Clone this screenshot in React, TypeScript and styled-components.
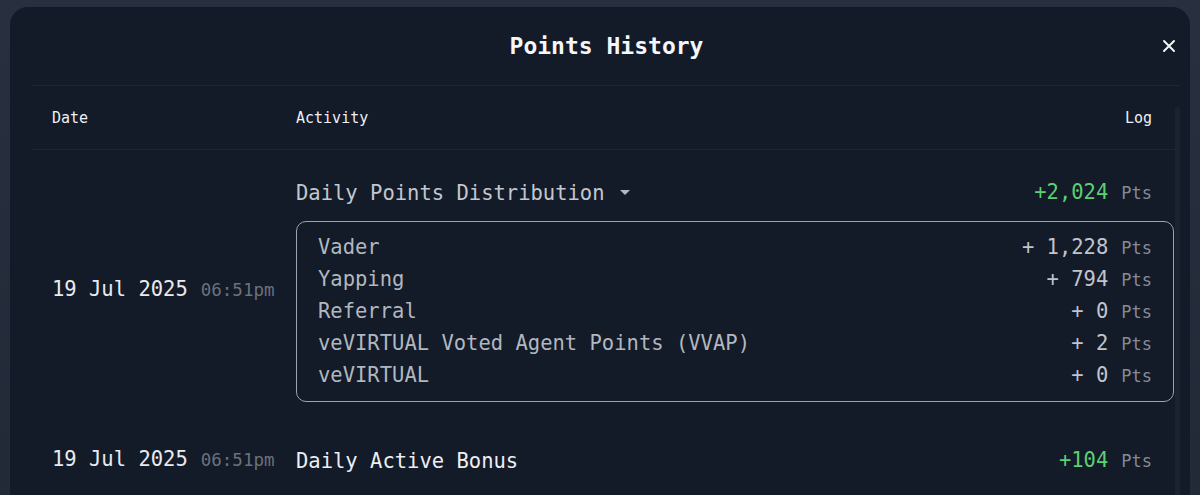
import React from "react";
import styled, { createGlobalStyle } from "styled-components";

interface SubPoint {
  label: string;
  value: string;
}

interface HistoryEntry {
  date: string;
  time: string;
  activity: string;
  total: string;
  breakdown?: SubPoint[];
}

const entries: HistoryEntry[] = [
  {
    date: "19 Jul 2025",
    time: "06:51pm",
    activity: "Daily Points Distribution",
    total: "+2,024",
    breakdown: [
      { label: "Vader", value: "1,228" },
      { label: "Yapping", value: "794" },
      { label: "Referral", value: "0" },
      { label: "veVIRTUAL Voted Agent Points (VVAP)", value: "2" },
      { label: "veVIRTUAL", value: "0" },
    ],
  },
  {
    date: "19 Jul 2025",
    time: "06:51pm",
    activity: "Daily Active Bonus",
    total: "+104",
  },
];

const App: React.FC = () => {
  return (
    <>
      <GlobalStyle />
      <Page>
        <Modal>
          <ModalHeader>
            <span />
            <Title>Points History</Title>
            <CloseButton aria-label="Close">
              <svg width="14" height="14" viewBox="0 0 14 14">
                <path
                  d="M2 2 L12 12 M12 2 L2 12"
                  stroke="#f3f4f6"
                  strokeWidth="2"
                  strokeLinecap="round"
                />
              </svg>
            </CloseButton>
          </ModalHeader>
          <Divider />
          <Body>
            <Table>
              <HeadRow>
                <HeadCell>Date</HeadCell>
                <HeadCell>Activity</HeadCell>
                <HeadCell>Log</HeadCell>
              </HeadRow>
              <Rows>
                {entries.map((entry, i) => (
                  <Row key={i}>
                    <DateCell>
                      {entry.date}
                      <Time>{entry.time}</Time>
                    </DateCell>
                    <Content>
                      <TitleLine>
                        <ActivityName muted={!!entry.breakdown}>
                          {entry.activity}
                          {entry.breakdown && <Caret />}
                        </ActivityName>
                        <Amount>
                          <Gain>{entry.total}</Gain>
                          <Unit>Pts</Unit>
                        </Amount>
                      </TitleLine>
                      {entry.breakdown && (
                        <Breakdown>
                          {entry.breakdown.map((item) => (
                            <BreakdownLine key={item.label}>
                              <span>{item.label}</span>
                              <Amount>
                                <span>+ {item.value}</span>
                                <Unit>Pts</Unit>
                              </Amount>
                            </BreakdownLine>
                          ))}
                        </Breakdown>
                      )}
                    </Content>
                  </Row>
                ))}
              </Rows>
            </Table>
            <ScrollTrack />
          </Body>
        </Modal>
      </Page>
    </>
  );
};

const GlobalStyle = createGlobalStyle`
  html, body {
    margin: 0;
    height: 100%;
    overflow: hidden;
    background: #242b39;
  }
  body {
    font-family: "DejaVu Sans Mono", "Liberation Mono", monospace;
  }
`;

const Page = styled.div`
  height: 100vh;
  box-sizing: border-box;
  padding: 7px 10px 0;
  background: linear-gradient(180deg, #283040 0%, #222937 100%);
`;

const Modal = styled.div`
  height: 100%;
  background: #131a28;
  border-radius: 18px 18px 0 0;
  display: flex;
  flex-direction: column;
  overflow: hidden;
`;

const ModalHeader = styled.div`
  height: 78px;
  display: grid;
  grid-template-columns: 1fr auto 1fr;
  align-items: center;
  padding: 0 9px 0 22px;
  flex-shrink: 0;
`;

const Title = styled.h1`
  margin: 0;
  font-size: 23px;
  font-weight: 700;
  color: #f5f6f8;
`;

const CloseButton = styled.button`
  justify-self: end;
  width: 24px;
  height: 24px;
  padding: 0;
  border: none;
  background: transparent;
  display: flex;
  align-items: center;
  justify-content: center;
  cursor: pointer;
`;

const Divider = styled.div`
  margin: 0 10px 0 22px;
  border-top: 1px solid #1e2535;
`;

const Body = styled.div`
  flex: 1;
  min-height: 0;
  margin: 0 10px 0 22px;
  display: flex;
`;

const Table = styled.div`
  flex: 1;
  min-width: 0;
  overflow: hidden;
`;

const ScrollTrack = styled.div`
  width: 5px;
  margin-top: 21px;
  background: #1b2230;
  border-radius: 2px 2px 0 0;
`;

const HeadRow = styled.div`
  height: 63px;
  display: grid;
  grid-template-columns: 244px 1fr auto;
  align-items: center;
  padding: 0 23px 0 20px;
  border-bottom: 1px solid #1e2535;
`;

const HeadCell = styled.div`
  font-size: 15px;
  color: #eef0f3;
`;

const Rows = styled.div`
  padding-top: 6px;
`;

const Row = styled.div`
  display: grid;
  grid-template-columns: 244px 1fr;
  align-items: center;
  padding: 22px 1px 22px 20px;
`;

const DateCell = styled.div`
  font-size: 20.5px;
  color: #e8eaee;
  white-space: nowrap;
  display: flex;
  align-items: baseline;
  margin-top: -3px;
`;

const Time = styled.span`
  font-size: 17.5px;
  color: #6b717c;
  margin-left: 13px;
`;

const Content = styled.div`
  display: flex;
  flex-direction: column;
`;

const TitleLine = styled.div`
  display: flex;
  justify-content: space-between;
  align-items: center;
  line-height: 28px;
  padding-right: 22px;
`;

const ActivityName = styled.div<{ muted: boolean }>`
  font-size: 20.5px;
  color: ${(p) => (p.muted ? "#c3c7ce" : "#eceef2")};
  display: flex;
  align-items: center;
`;

const Caret = styled.span`
  width: 0;
  height: 0;
  margin-left: 15px;
  border-left: 5px solid transparent;
  border-right: 5px solid transparent;
  border-top: 5px solid #b3b8c0;
`;

const Amount = styled.div`
  display: flex;
  align-items: baseline;
  font-size: 20.5px;
  color: #c0c4cb;
  white-space: nowrap;
`;

const Gain = styled.span`
  color: #5bcf72;
`;

const Unit = styled.span`
  font-size: 17px;
  color: #858a94;
  margin-left: 13px;
`;

const Breakdown = styled.div`
  margin-top: 14px;
  border: 1.5px solid #9ea3ac;
  border-radius: 10px;
  padding: 9px 21px 10px;
`;

const BreakdownLine = styled.div`
  height: 32px;
  display: flex;
  justify-content: space-between;
  align-items: center;
  font-size: 20.5px;
  color: #b2b7bf;
`;

export default App;
